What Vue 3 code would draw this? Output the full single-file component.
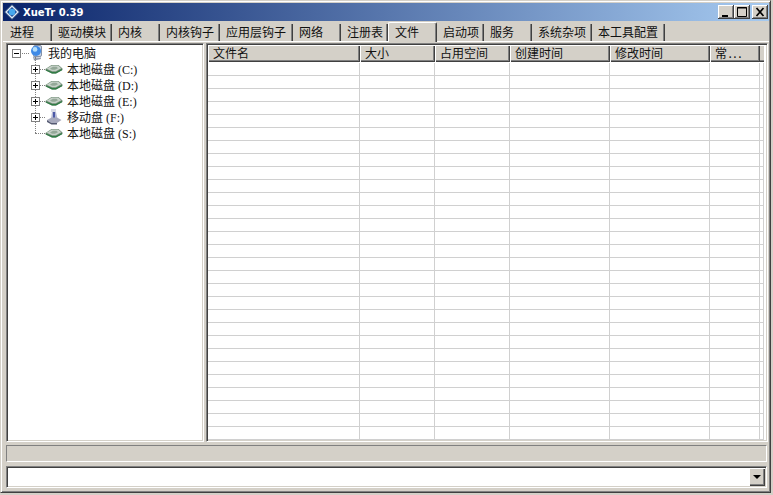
<script setup>
const tabs = [
  { label: '进程', w: 47 }, { label: '驱动模块', w: 60 }, { label: '内核', w: 48 }, { label: '内核钩子', w: 60 },
  { label: '应用层钩子', w: 73 }, { label: '网络', w: 48 }, { label: '注册表', w: 47 }, { label: '文件', w: 49, active: true },
  { label: '启动项', w: 47 }, { label: '服务', w: 48 }, { label: '系统杂项', w: 60 }, { label: '本工具配置', w: 73 }
]
const cols = [
  { label: '文件名', w: 152 }, { label: '大小', w: 75 }, { label: '占用空间', w: 75 },
  { label: '创建时间', w: 100 }, { label: '修改时间', w: 100 }, { label: '常...', w: 50, dots: true }
]
const rows = Array.from({ length: 29 })
const drives = [
  { label: '本地磁盘 (C:)', type: 'disk', box: true },
  { label: '本地磁盘 (D:)', type: 'disk', box: true },
  { label: '本地磁盘 (E:)', type: 'disk', box: true },
  { label: '移动盘 (F:)', type: 'usb', box: true },
  { label: '本地磁盘 (S:)', type: 'disk', box: false }
]
</script>

<template>
  <div class="window">
    <div class="titlebar">
      <svg class="logo" width="16" height="16" viewBox="0 0 16 16">
        <path d="M8 0.5L15.5 8L8 15.5L0.5 8Z" fill="#dfe9f5" stroke="#16386f" stroke-width="1" stroke-linejoin="round" />
        <path d="M8 3L13 8L8 13L3 8Z" fill="#1d4f9a" />
        <circle cx="8" cy="8" r="3.2" fill="#46a8ee" />
      </svg>
      <span class="title">XueTr 0.39</span>
      <div class="controls">
        <button class="ctl"><svg width="16" height="14" viewBox="0 0 16 14"><rect x="4" y="10" width="6" height="2" fill="#000" /></svg></button>
        <button class="ctl"><svg width="16" height="14" viewBox="0 0 16 14"><path d="M3.5 2.5H12.5V11.5H3.5ZM3 3H13" fill="none" stroke="#000" /></svg></button>
        <button class="ctl close"><svg width="16" height="14" viewBox="0 0 16 14"><path d="M4.5 3L11.5 11M11.5 3L4.5 11" stroke="#000" stroke-width="1.7" /></svg></button>
      </div>
    </div>

    <div class="tabs">
      <div v-for="t in tabs" :key="t.label" class="tab" :class="{ active: t.active }" :style="{ width: t.w + 'px' }">{{ t.label }}</div>
    </div>

    <div class="panes">
      <div class="tree sunken">
        <div class="node root">
          <span class="box"><i class="h"></i></span>
          <i class="dots"></i>
          <svg class="icon" width="14" height="16" viewBox="0 0 14 16">
            <rect x="3.5" y="0.5" width="8" height="11" rx="1.5" fill="#c9d3e2" stroke="#8391aa" />
            <circle cx="6" cy="6" r="5" fill="#3f8ae6" />
            <circle cx="5" cy="4.4" r="2.4" fill="#b4def9" />
            <path d="M3 11.5L10 11L11 14L4 15.5Z" fill="#8c95a6" />
            <path d="M4 13L10 12.5" stroke="#d7dbe4" />
          </svg>
          <span class="label">我的电脑</span>
        </div>
        <div class="children">
          <i class="vline"></i>
          <div v-for="d in drives" :key="d.label" class="node child">
            <span v-if="d.box" class="box"><i class="h"></i><i class="v"></i></span>
            <span v-else class="nobox"></span>
            <i class="dots" :class="{ long: !d.box }"></i>
            <svg v-if="d.type === 'disk'" class="icon" width="18" height="12" viewBox="0 0 18 12">
              <path d="M0.5 6L6.5 2H13.5L17.5 5.5V7L11 10.5H7L0.5 7.5Z" fill="#6f8a74" />
              <path d="M1.5 5.8L6.8 2.6H13.2L16.3 5.3L10.8 8.3H7.2Z" fill="#c6d1c8" />
              <path d="M5 5.5L8 3.8H11.5L13 5.2L10 6.8H7Z" fill="#94a898" />
              <path d="M7 9H11L17 6V7.2L11 10.5H7L1 7.5V6.5Z" fill="#2f7d45" />
            </svg>
            <svg v-else class="icon" width="18" height="16" viewBox="0 0 18 16">
              <path d="M6 0H11V3H6Z" fill="#d8dae6" />
              <path d="M7 3H11L12.5 10H6Z" fill="#b5b9d3" />
              <path d="M8 3H10V10H8Z" fill="#4d5aa8" />
              <path d="M2 11L6.5 8.5H12L16.5 11L12 14H6.5Z" fill="#a7aabd" />
              <path d="M2 11L6.5 14H12V15.5H6.5L2 13Z" fill="#555a72" />
            </svg>
            <span class="label">{{ d.label }}</span>
          </div>
        </div>
      </div>

      <div class="list sunken">
        <div class="head">
          <div v-for="c in cols" :key="c.label" class="hcell" :class="{ dots: c.dots }" :style="{ width: c.w + 'px' }">{{ c.label }}</div>
          <div class="hfill"></div>
        </div>
        <div class="body">
          <div v-for="(r, i) in rows" :key="i" class="row">
            <div v-for="c in cols" :key="c.label" class="cell" :style="{ width: c.w + 'px' }"></div>
            <div class="cell tail"></div>
          </div>
        </div>
      </div>
    </div>

    <div class="status"></div>

    <div class="combo">
      <div class="arrow"><i></i></div>
    </div>
  </div>
</template>

<style>
html, body { margin: 0; background: #d4d0c8; }
</style>

<style scoped>
.window {
  width: 771px;
  height: 493px;
  box-sizing: border-box;
  background: #d4d0c8;
  border: 1px solid;
  border-color: #d4d0c8 #404040 #404040 #d4d0c8;
  box-shadow: inset 1px 1px 0 #fff, inset -1px -1px 0 #808080;
  padding: 2px 1px 0 2px;
  display: flex;
  flex-direction: column;
  font-family: "Noto Sans CJK SC", "Liberation Sans", sans-serif;
  font-size: 12px;
  color: #111;
  overflow: hidden;
}
.titlebar {
  height: 18px;
  flex: none;
  display: flex;
  align-items: center;
  background: linear-gradient(90deg, #0a246a, #a6caf0);
  padding: 0 1px 0 1px;
}
.logo { flex: none; margin-right: 3px; }
.title {
  font-family: "DejaVu Sans", sans-serif;
  font-weight: 700;
  font-size: 10px;
  color: #fff;
}
.controls { margin-left: auto; display: flex; align-items: center; }
.ctl {
  width: 16px;
  height: 14px;
  padding: 0;
  border: 0;
  background: #d4d0c8;
  box-shadow: inset -1px -1px 0 #404040, inset 1px 1px 0 #fff, inset -2px -2px 0 #808080;
  display: block;
}
.ctl svg { display: block; }
.close { margin-left: 2px; }
.tabs {
  flex: none;
  height: 20px;
  display: flex;
  align-items: flex-end;
  padding: 0 0 0 2px;
  border-bottom: 1px solid #fff;
  box-sizing: border-box;
  margin-top: 1px;
}
.tab {
  height: 17px;
  line-height: 15px;
  box-sizing: border-box;
  padding-left: 6px;
  border-right: 1px solid #404040;
  box-shadow: inset -1px 0 0 #808080;
  font-size: 12px;
  white-space: nowrap;
  flex: none;
}
.tab:first-child { padding-left: 5px; }
.tab.active {
  height: 20px;
  line-height: 17px;
  background: #d4d0c8;
  border-top: 1px solid #fff;
  border-left: 1px solid #fff;
  border-right: 1px solid #404040;
  margin-bottom: -1px;
  border-radius: 2px 2px 0 0;
  padding-left: 6px;
}
.panes {
  flex: none;
  display: flex;
  gap: 2px;
  height: 399px;
  padding-left: 3px;
  margin-top: 1px;
}
.sunken {
  box-sizing: border-box;
  background: #fff;
  border: 1px solid;
  border-color: #808080 #fff #fff #808080;
  box-shadow: inset 1px 1px 0 #404040, inset -1px -1px 0 #d4d0c8;
}
.tree {
  width: 198px;
  flex: none;
  padding: 1px 0 0 5px;
}
.node {
  display: flex;
  align-items: center;
  height: 16px;
  position: relative;
}
.box {
  width: 9px;
  height: 9px;
  box-sizing: border-box;
  border: 1px solid #808080;
  background: #fff;
  position: relative;
  flex: none;
}
.nobox { width: 4px; flex: none; }
.box .h { position: absolute; left: 1px; right: 1px; top: 3px; height: 1px; background: #000; }
.box .v { position: absolute; top: 1px; bottom: 1px; left: 3px; width: 1px; background: #000; }
.dots {
  width: 5px;
  border-top: 1px dotted #808080;
  flex: none;
}
.dots.long { width: 10px; }
.icon { flex: none; }
.root .dots { width: 7px; margin: 0 1px; }
.root .icon { margin-right: 4px; }
.label { font-family: "Liberation Serif", "Noto Sans CJK SC", serif; font-size: 12px; white-space: nowrap; }
.children {
  padding-left: 19px;
  position: relative;
}
.vline {
  position: absolute;
  left: 23px;
  top: -4px;
  height: 76px;
  border-left: 1px dotted #808080;
}
.child .icon { margin-right: 4px; }
.list {
  flex: 1;
  padding: 1px 0 0 1px;
  overflow: hidden;
  min-width: 0;
  margin-right: 1px;
}
.head { display: flex; height: 17px; margin-bottom: 1px; }
.hcell {
  flex: none;
  box-sizing: border-box;
  background: #d4d0c8;
  padding-left: 5px;
  line-height: 15px;
  font-size: 12px;
  box-shadow: inset 1px 1px 0 #fff, inset -1px -1px 0 #404040, inset -2px -2px 0 #808080;
  white-space: nowrap;
  overflow: hidden;
}
.hcell.dots { letter-spacing: 1.5px; border: 0; width: auto; }
.hfill {
  width: 4px;
  flex: none;
  background: #d4d0c8;
  box-shadow: inset 0 -1px 0 #404040, inset 0 -2px 0 #808080, inset 0 1px 0 #fff;
}
.row { display: flex; height: 13px; }
.cell {
  flex: none;
  box-sizing: border-box;
  height: 13px;
  border-right: 1px solid #d0d0d0;
  border-bottom: 1px solid #d0d0d0;
}
.cell.tail { width: 4px; }
.status {
  flex: none;
  height: 17px;
  margin: 3px 2px 0 3px;
  box-sizing: border-box;
  border-top: 1px solid #808080;
  border-left: 1px solid #808080;
  border-right: 1px solid #fff;
  border-bottom: 1px solid #fff;
}
.combo {
  flex: none;
  height: 22px;
  margin: 4px 2px 0 3px;
  box-sizing: border-box;
  background: #fff;
  border: 1px solid;
  border-color: #808080 #fff #fff #808080;
  box-shadow: inset 1px 1px 0 #404040, inset -1px -1px 0 #d4d0c8;
  display: flex;
  justify-content: flex-end;
  align-items: stretch;
  padding: 1px;
}
.arrow {
  width: 16px;
  background: #d4d0c8;
  box-shadow: inset 1px 1px 0 #fff, inset -1px -1px 0 #404040, inset -2px -2px 0 #808080;
  display: flex;
  align-items: center;
  justify-content: center;
}
.arrow i {
  width: 0;
  height: 0;
  border-left: 4px solid transparent;
  border-right: 4px solid transparent;
  border-top: 4px solid #000;
}
</style>
